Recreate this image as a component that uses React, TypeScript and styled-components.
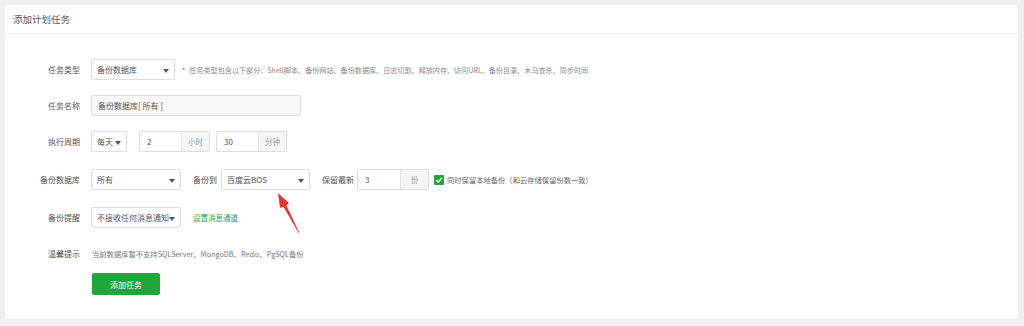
import styled, { createGlobalStyle } from 'styled-components';

const GlobalStyle = createGlobalStyle`
  html, body {
    margin: 0;
    padding: 0;
    background: #f0f0f0;
  }
  body {
    font-family: "Microsoft YaHei", "Noto Sans CJK SC", "Noto Sans", sans-serif;
    color: #555;
  }
`;

const green = "#20a53a";

const Page = styled.div`
  width: 1024px;
  height: 326px;
  padding: 5px 6px 7px 5px;
  box-sizing: border-box;
`;

const Card = styled.div`
  background: #fff;
  height: 100%;
  border-radius: 2px;
  box-shadow: 0 0 2px rgba(0, 0, 0, 0.04);
  display: flex;
  flex-direction: column;
`;

const CardHeader = styled.div`
  height: 29px;
  border-bottom: 1px solid #eee;
  display: flex;
  align-items: center;
  padding-left: 8px;
  font-size: 9.5px;
  color: #555;
  box-sizing: border-box;
`;

const Form = styled.div`
  padding-top: 25px;
  display: flex;
  flex-direction: column;
`;

const Row = styled.div<{ $gap?: number; $height?: number }>`
  display: flex;
  align-items: center;
  height: ${p => p.$height ?? 21}px;
  margin-bottom: ${p => p.$gap ?? 15}px;
`;

const Label = styled.div`
  width: 75px;
  margin-right: 11px;
  text-align: right;
  font-size: 8px;
  color: #555;
  white-space: nowrap;
`;

const InlineLabel = styled.div<{ $ml: number; $mr: number }>`
  margin-left: ${p => p.$ml}px;
  margin-right: ${p => p.$mr}px;
  font-size: 8px;
  color: #555;
  white-space: nowrap;
`;

const SelectBox = styled.div<{ $w: number; $ml?: number }>`
  position: relative;
  width: ${p => p.$w}px;
  height: 21px;
  margin-left: ${p => p.$ml ?? 0}px;
  border: 1px solid #ddd;
  border-radius: 2px;
  box-sizing: border-box;
  display: flex;
  align-items: center;
  padding: 0 0 0 5px;
  font-size: 8px;
  color: #555;
  white-space: nowrap;
  background: #fff;
`;

const SelectText = styled.span`
  white-space: nowrap;
`;

const Caret = styled.span`
  position: absolute;
  right: 5px;
  top: 8.5px;
  width: 0;
  height: 0;
  border-left: 3.5px solid transparent;
  border-right: 3.5px solid transparent;
  border-top: 4px solid #555;
`;

const TextInput = styled.div<{ $w: number; $bg?: string }>`
  width: ${p => p.$w}px;
  height: 21px;
  border: 1px solid #ddd;
  border-radius: 2px;
  box-sizing: border-box;
  background: ${p => p.$bg ?? "#fff"};
  display: flex;
  align-items: center;
  padding: 0 6px;
  font-size: 8px;
  color: #555;
  white-space: nowrap;
`;

const Group = styled.div<{ $ml?: number }>`
  display: flex;
  height: 21px;
  margin-left: ${p => p.$ml ?? 0}px;
  border: 1px solid #ddd;
  border-radius: 2px;
  box-sizing: border-box;
`;

const GroupInput = styled.div<{ $w: number }>`
  width: ${p => p.$w}px;
  display: flex;
  align-items: center;
  padding-left: 7px;
  box-sizing: border-box;
  font-size: 8px;
  color: #555;
`;

const Addon = styled.div`
  width: 27px;
  background: #f5f5f5;
  border-left: 1px solid #e6e6e6;
  display: flex;
  align-items: center;
  justify-content: center;
  font-size: 7.5px;
  color: #999;
`;

const Hint = styled.div`
  margin-left: 7px;
  font-size: 7.1px;
  color: #888;
  white-space: nowrap;
`;

const Star = styled.span`
  color: #ef3a3a;
  margin-right: 4px;
`;

const Check = styled.span`
  width: 10px;
  height: 10px;
  margin-left: 5px;
  margin-right: 3px;
  background: ${green};
  border-radius: 1px;
  display: inline-flex;
  align-items: center;
  justify-content: center;
`;

const CheckText = styled.span`
  font-size: 7.3px;
  color: #666;
  white-space: nowrap;
`;

const Link = styled.a`
  margin-left: 12px;
  font-size: 7.5px;
  color: ${green};
  text-decoration: none;
`;

const TipText = styled.div`
  font-size: 7.3px;
  color: #777;
  white-space: nowrap;
  padding-left: 1px;
`;

const SubmitButton = styled.button`
  margin-left: 87px;
  width: 68px;
  height: 22px;
  border: none;
  border-radius: 2px;
  background: ${green};
  color: #fff;
  font-family: inherit;
  font-size: 8px;
  padding: 0;
  cursor: pointer;
`;

const Arrow = styled.svg`
  position: absolute;
  left: 49px;
  top: 19px;
  width: 32px;
  height: 48px;
  overflow: visible;
`;

export default function App() {
  return (
    <>
      <GlobalStyle />
      <Page>
        <Card>
          <CardHeader>添加计划任务</CardHeader>
          <Form>
            <Row>
              <Label>任务类型</Label>
              <SelectBox $w={84}>
                <SelectText>备份数据库</SelectText>
                <Caret />
              </SelectBox>
              <Hint>
                <Star>*</Star>任务类型包含以下部分：Shell脚本、备份网站、备份数据库、日志切割、释放内存、访问URL、备份目录、木马查杀、同步时间
              </Hint>
            </Row>
            <Row>
              <Label>任务名称</Label>
              <TextInput $w={210} $bg="#f8f8f8">备份数据库[ 所有 ]</TextInput>
            </Row>
            <Row $gap={17}>
              <Label>执行周期</Label>
              <SelectBox $w={36}>
                <SelectText>每天</SelectText>
                <Caret />
              </SelectBox>
              <Group $ml={12}>
                <GroupInput $w={41}>2</GroupInput>
                <Addon>小时</Addon>
              </Group>
              <Group $ml={6}>
                <GroupInput $w={41}>30</GroupInput>
                <Addon>分钟</Addon>
              </Group>
            </Row>
            <Row $gap={17}>
              <Label>备份数据库</Label>
              <SelectBox $w={90}>
                <SelectText>所有</SelectText>
                <Caret />
              </SelectBox>
              <InlineLabel $ml={12} $mr={4}>备份到</InlineLabel>
              <SelectBox $w={89}>
                <SelectText>百度云BOS</SelectText>
                <Caret />
                <Arrow viewBox="0 0 32 48">
                  <polygon
                    points="7,4 17.9,14.1 15.4,16.6 28.4,43.9 27.8,44.2 12.6,18 9.1,18.7"
                    fill="#f0302a"
                  />
                </Arrow>
              </SelectBox>
              <InlineLabel $ml={12} $mr={3}>保留最新</InlineLabel>
              <Group>
                <GroupInput $w={42}>3</GroupInput>
                <Addon>份</Addon>
              </Group>
              <Check>
                <svg width="8" height="8" viewBox="0 0 8 8">
                  <path d="M1.3 4.2 L3.2 6 L6.8 2" stroke="#fff" strokeWidth="1.4" fill="none" />
                </svg>
              </Check>
              <CheckText>同时保留本地备份（和云存储保留份数一致)</CheckText>
            </Row>
            <Row>
              <Label>备份提醒</Label>
              <SelectBox $w={90}>
                <SelectText>不接收任何消息通知</SelectText>
                <Caret />
              </SelectBox>
              <Link>设置消息通道</Link>
            </Row>
            <Row $gap={9}>
              <Label>温馨提示</Label>
              <TipText>当前数据库暂不支持SQLServer、MongoDB、Redis、PgSQL备份</TipText>
            </Row>
            <SubmitButton>添加任务</SubmitButton>
          </Form>
        </Card>
      </Page>
    </>
  );
}
